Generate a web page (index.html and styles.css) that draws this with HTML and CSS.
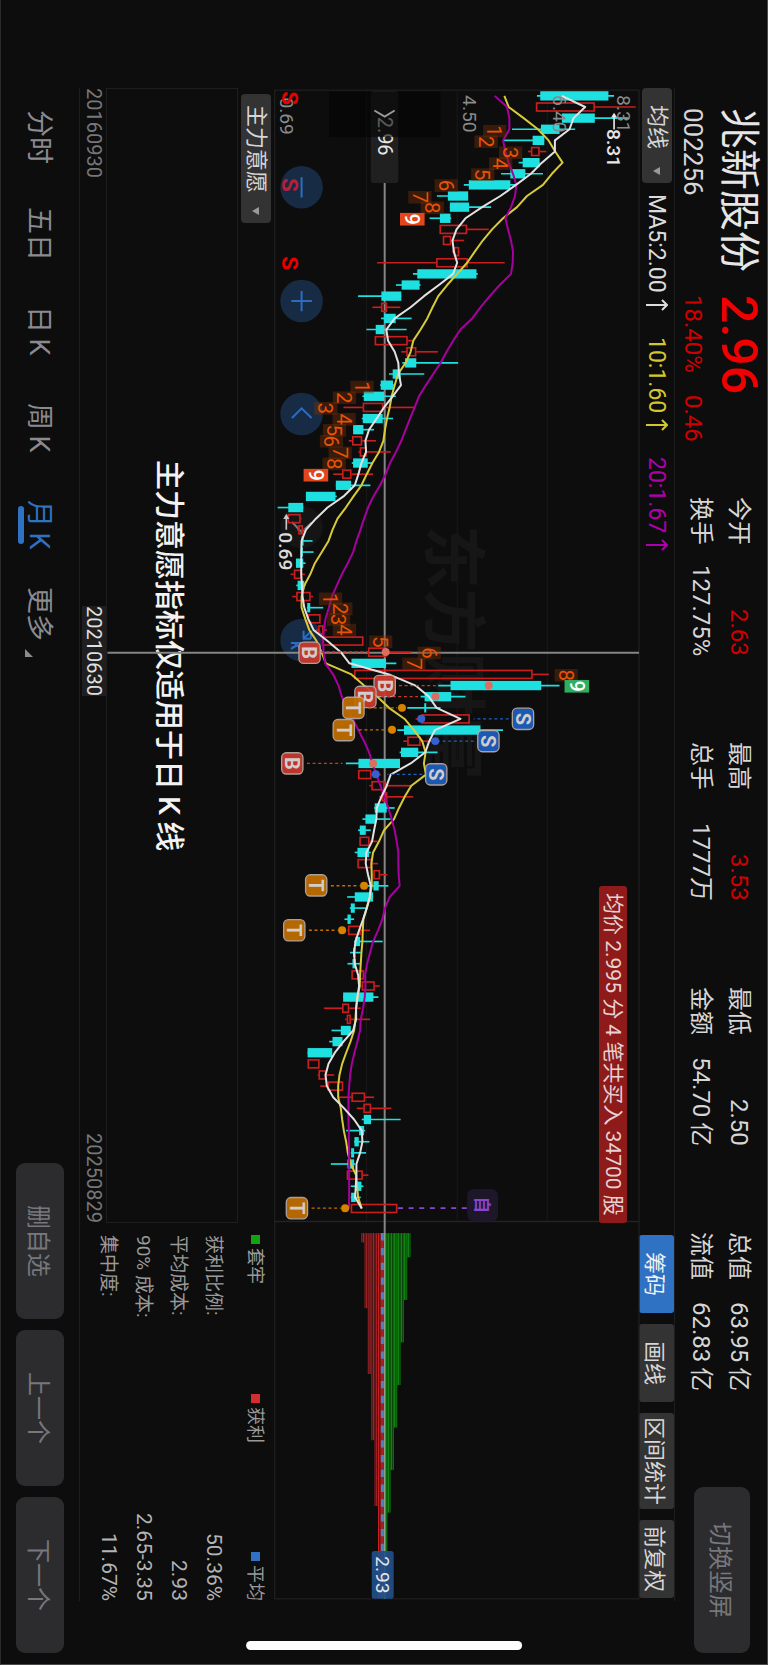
FILE: index.html
```html
<!DOCTYPE html>
<html lang="zh-CN">
<head>
<meta charset="utf-8">
<meta name="viewport" content="width=device-width, initial-scale=1">
<title>兆新股份 002256</title>
<link rel="stylesheet" href="styles.css">
</head>
<body>
<div class="app">
  <header class="quote">
    <div class="identity">
      <h1 class="name">兆新股份</h1>
      <strong class="price">2.96</strong>
      <span class="code">002256</span>
      <span class="change"><span>18.40%</span><span>0.46</span></span>
    </div>
    <dl class="facts">
      <div class="fact"><dt>今开</dt><dd class="up">2.63</dd></div>
      <div class="fact"><dt>换手</dt><dd>127.75%</dd></div>
      <div class="fact"><dt>最高</dt><dd class="up">3.53</dd></div>
      <div class="fact"><dt>总手</dt><dd>1777万</dd></div>
      <div class="fact"><dt>最低</dt><dd>2.50</dd></div>
      <div class="fact"><dt>金额</dt><dd>54.70&thinsp;亿</dd></div>
      <div class="fact"><dt>总值</dt><dd>63.95&thinsp;亿</dd></div>
      <div class="fact"><dt>流值</dt><dd>62.83&thinsp;亿</dd></div>
    </dl>
    <button class="soft-button switch" type="button">切换竖屏</button>
  </header>

  <div class="toolbar">
    <button class="picker" type="button">均线<svg class="caret" viewBox="0 0 8 8" aria-hidden="true"><path d="M7 0v8L0 4z"/></svg></button>
    <span class="ma ma5">MA5:2.00<svg class="arrow" viewBox="0 0 22 12" aria-hidden="true"><path d="M0 6h21M16 1l5 5-5 5"/></svg></span>
    <span class="ma ma10">10:1.60<svg class="arrow" viewBox="0 0 22 12" aria-hidden="true"><path d="M0 6h21M16 1l5 5-5 5"/></svg></span>
    <span class="ma ma20">20:1.67<svg class="arrow" viewBox="0 0 22 12" aria-hidden="true"><path d="M0 6h21M16 1l5 5-5 5"/></svg></span>
    <div class="tools">
      <button class="tool active" type="button">筹码</button>
      <button class="tool" type="button">画线</button>
      <button class="tool wide" type="button">区间统计</button>
      <button class="tool" type="button">前复权</button>
    </div>
  </div>

  <section class="chart" aria-label="月K线图">
    <svg id="kline" class="kline" viewBox="39 24 1098 4542" role="img" aria-label="K线与筹码分布"></svg>
    <p class="note">均价 2.995 分 4 笔共买入 34700 股</p>
  </section>

  <div class="lower">
    <section class="study">
      <div class="study-bar">
        <button class="picker" type="button">主力意愿<svg class="caret" viewBox="0 0 8 8" aria-hidden="true"><path d="M7 0v8L0 4z"/></svg></button>
      </div>
      <p class="message">主力意愿指标仅适用于日&thinsp;K&thinsp;线</p>
      <div class="dates">
        <time>20160930</time>
        <time class="cursor-date">20210630</time>
        <time>20250829</time>
      </div>
    </section>
    <section class="chips">
      <ul class="legend">
        <li class="trapped">套牢</li>
        <li class="profit">获利</li>
        <li class="average">平均</li>
      </ul>
      <dl class="cost">
        <div><dt>获利比例:</dt><dd>50.36%</dd></div>
        <div><dt>平均成本:</dt><dd>2.93</dd></div>
        <div><dt>90% 成本:</dt><dd>2.65-3.35</dd></div>
        <div><dt>集中度:</dt><dd>11.67%</dd></div>
      </dl>
    </section>
  </div>

  <footer class="footer">
    <nav class="tabs">
      <a href="#">分时</a>
      <a href="#">五日</a>
      <a href="#">日&thinsp;K</a>
      <a href="#">周&thinsp;K</a>
      <a href="#" class="current" aria-current="page">月&thinsp;K</a>
      <a href="#">更多<svg class="corner" viewBox="0 0 8 8" aria-hidden="true"><path d="M0 0v8h8z"/></svg></a>
    </nav>
    <div class="actions">
      <button class="soft-button" type="button">删自选</button>
      <button class="soft-button" type="button">上一个</button>
      <button class="soft-button" type="button">下一个</button>
    </div>
  </footer>
</div>
<div class="home-bar"></div>
<script src="chart.js"></script>
</body>
</html>
```
FILE: styles.css
```css
* { box-sizing: border-box; margin: 0; padding: 0; }

html {
  writing-mode: vertical-rl;
  text-orientation: sideways;
  background: #0d0d0d;
}

body {
  height: 100vh;
  width: 100vw;
  position: relative;
  background: #0d0d0d;
  color: #d6d6d6;
  font-family: Roboto, "Noto Sans CJK SC", sans-serif;
  font-size: 22px;
  border-right: 1px solid #4a4a4a;
  border-bottom: 1px solid #4a4a4a;
  border-left: 1px solid #2a2a2a;
}

button {
  font: inherit;
  color: inherit;
  border: 0;
  writing-mode: vertical-rl;
  text-orientation: sideways;
  white-space: nowrap;
  cursor: pointer;
}

.app {
  display: grid;
  grid-template-rows: 92px 36px minmax(0, 1fr) 195px 78px;
  grid-template-columns: minmax(0, 1fr);
  inline-size: 100%;
  block-size: 100%;
  padding-inline-start: 88px;
}

/* Quote header */
.quote {
  display: flex;
  align-items: flex-start;
  padding-inline: 20px 11px;
  position: relative;
}

.identity {
  display: grid;
  grid-template-columns: 187px 202px;
  grid-template-rows: 56px 36px;
  align-items: center;
  white-space: nowrap;
}

.name { font-size: 41px; font-weight: 400; line-height: 48px; color: #e6e6e6; }
.price { font-size: 50px; font-weight: 500; line-height: 50px; color: #f00000; }
.code { font-size: 26px; line-height: 28px; }
.change { display: flex; gap: 22px; font-size: 24px; line-height: 28px; color: #d00000; }

.facts {
  display: grid;
  grid-auto-flow: column;
  grid-template-rows: 38px 38px;
  grid-auto-columns: 159px;
  column-gap: 86px;
  padding-block-start: 9px;
  font-size: 24px;
  line-height: 38px;
  white-space: nowrap;
}

.fact { display: flex; justify-content: space-between; }
.fact .up { color: #d00000; }

.soft-button {
  block-size: 48px;
  inline-size: 156px;
  border-radius: 9px;
  background: #2c2c2e;
  color: #77777c;
  font-size: 24px;
}

.switch {
  block-size: 56px;
  inline-size: 166px;
  margin-inline-start: auto;
  margin-block-start: 17px;
}

/* Indicator toolbar */
.toolbar {
  display: flex;
  align-items: center;
  margin-inline-end: 63px;
  border-block-start: 1px solid #1e1e1e;
}

.picker {
  display: flex;
  align-items: center;
  justify-content: space-between;
  gap: 14px;
  block-size: 30px;
  padding-inline: 11px 8px;
  border-radius: 4px;
  background: #333;
  line-height: 30px;
}

.toolbar .picker { gap: 18px; padding-inline-start: 17px; }

.caret { width: 8px; height: 8px; fill: #9a9a9a; }

.ma { display: flex; align-items: center; gap: 6px; margin-inline-start: 26px; font-size: 23px; }
.ma5 { margin-inline-start: 11px; color: #dcdcdc; }
.ma10 { color: #d3c62e; }
.ma20 { color: #b000ae; }

.arrow {
  width: 22px;
  height: 12px;
  fill: none;
  stroke: currentColor;
  stroke-width: 2;
}

.tools { display: flex; gap: 11px; margin-inline-start: auto; padding-inline-end: 3px; }

.tool {
  block-size: 35px;
  inline-size: 78px;
  border-radius: 3px;
  background: #333;
}

.tool.wide { inline-size: 96px; }
.tool.active { background: #2f72c4; color: #f0f0f0; }

/* Chart */
.chart { position: relative; margin-inline-end: 63px; z-index: 1; min-inline-size: 0; min-block-size: 0; }

.kline {
  display: block;
  width: 100%;
  height: 100%;
  overflow: visible;
  writing-mode: horizontal-tb;
  font-family: Roboto, "Noto Sans CJK SC", sans-serif;
  pointer-events: none;
}

.note {
  position: absolute;
  inset-block-start: 12px;
  inset-inline-end: 378px;
  padding-inline: 7px;
  border-radius: 3px;
  background: #8e1a1a;
  color: #e6d2d2;
  font-size: 21px;
  line-height: 28px;
  white-space: nowrap;
}

/* Lower area */
.lower {
  display: grid;
  grid-template-columns: 1fr 366px;
  column-gap: 12px;
  margin-inline-end: 63px;
  border-block-end: 1px solid #1e1e1e;
}

.study { display: grid; grid-template-rows: 36px 1fr 26px; }
.study-bar { display: flex; align-items: center; padding-inline-start: 6px; }

.message {
  display: flex;
  align-items: center;
  justify-content: center;
  border: 1px solid #1e1e1e;
  color: #f2f2f2;
  font-size: 30px;
  font-weight: 500;
  white-space: nowrap;
}

.dates {
  position: relative;
  display: flex;
  justify-content: space-between;
  color: #77777a;
  font-size: 20px;
  line-height: 24px;
}

.cursor-date {
  position: absolute;
  inset-inline-start: 518px;
  background: #1f1f1f;
  color: #e0e0e0;
}

.chips { color: #9a9a9a; font-size: 18px; white-space: nowrap; }

.legend {
  display: flex;
  justify-content: space-between;
  list-style: none;
  line-height: 38px;
  padding-block-end: 5px;
}

.legend li { display: flex; align-items: center; gap: 4px; }
.legend li::before { content: ""; inline-size: 9px; block-size: 9px; background: currentColor; }
.legend .trapped::before { background: #10a510; }
.legend .profit::before { background: #d12f2f; }
.legend .average::before { background: #2f72c4; }

.cost div { display: flex; justify-content: space-between; line-height: 35px; }
.cost dt { font-size: 19px; }
.cost dd { font-size: 21px; color: #b4b4b4; }

/* Footer */
.footer {
  display: flex;
  align-items: flex-start;
  justify-content: space-between;
  padding-block-start: 15px;
  padding-inline-end: 11px;
}

.tabs { display: flex; }

.tabs a {
  display: flex;
  align-items: center;
  justify-content: center;
  position: relative;
  inline-size: 97px;
  color: #8a8a90;
  font-size: 27px;
  line-height: 50px;
  text-decoration: none;
  white-space: nowrap;
}

.tabs .current { color: #2f72c4; }

.tabs .current::after {
  content: "";
  position: absolute;
  inset-block-end: 4px;
  inline-size: 38px;
  block-size: 6px;
  border-radius: 3px;
  background: #2f72c4;
}

.corner {
  width: 8px;
  height: 8px;
  margin-inline-start: 8px;
  align-self: flex-end;
  margin-block-end: 11px;
  fill: #8a8a90;
}

.actions { display: flex; gap: 11px; }

.home-bar {
  position: absolute;
  bottom: 14px;
  left: 50%;
  width: 36%;
  height: 9px;
  transform: translateX(-50%);
  border-radius: 5px;
  background: #fff;
}
```
FILE: chart.js
```js
// Monthly candles: [direction, low, body start, body end, high]; "d" falls, "u" rises.
const candles = [
  ["d",830,840,1045,1062],["u",827,827,1004,1127],["d",905,905,1004,1105],["d",755,842,898,945],
  ["d",730,817,852,852],["u",803,812,838,858],["d",775,787,838,838],["d",722,750,795,848],
  ["d",610,625,750,765],["d",529,562,623,623],["d",568,568,626,692],["d",507,538,570,572],
  ["u",537,537,620,685],["u",547,547,572,611],["u",575,580,596,598],["u",349,527,622,733],
  ["d",457,470,648,652],["d",406,423,477,480],["d",292,362,422,422],["u",335,361,379,419],
  ["d",361,370,405,453],["d",317,345,370,438],["u",342,342,441,455],["u",422,437,467,532],
  ["d",425,433,467,593],["d",385,396,420,491],["d",358,360,397,400],["d",305,309,370,405],
  ["u",248,306,368,462],["d",303,306,366,397],["d",277,277,308,340],["u",264,274,304,346],
  ["u",293,297,318,390],["d",273,277,321,335],["u",217,244,272,337],["d",225,225,271,329],
  ["d",135,135,224,228],["d",50,82,127,127],["u",80,80,119,122],["u",108,112,126,132],
  ["d",122,122,128,155],["d",120,120,126,158],["d",105,105,127,134],["u",89,99,122,132],
  ["d",106,110,130,134],["u",94,106,149,157],["d",138,139,148,187],["u",140,140,179,179],
  ["u",165,172,188,198],["u",185,185,308,308],["u",320,322,378,452],["d",272,272,376,407],
  ["u",280,280,817,866],["d",533,570,843,898],["d",480,492,572,615],["d",440,491,497,540],
  ["u",465,482,628,628],["d",410,430,660,728],["u",428,440,480,525],["d",417,421,473,531],
  ["d",255,293,418,418],["u",292,292,332,360],["u",326,332,372,452],["u",355,363,380,458],
  ["d",340,342,378,402],["d",305,314,345,390],["d",292,297,315,330],["u",295,296,326,350],
  ["d",282,290,325,330],["u",290,290,334,352],["u",335,338,358,380],["d",320,338,354,383],
  ["d",259,282,337,337],["d",267,270,282,320],["d",251,260,270,280],["u",260,262,300,328],
  ["d",280,284,298,366],["d",268,277,284,300],["d",260,275,285,298],["u",272,272,310,310],
  ["u",300,303,342,357],["d",247,247,338,353],["u",189,244,265,300],["u",253,258,270,328],
  ["d",212,240,270,270],["d",205,215,245,246],["d",140,140,214,214],["u",140,140,176,176],
  ["u",170,173,196,220],["u",178,200,247,247],["u",235,272,313,340],["u",288,308,331,392],
  ["d",303,309,331,420],["d",256,295,310,313],["d",280,281,294,326],["d",270,271,280,316],
  ["d",210,260,280,283],["u",258,258,306,323],["d",270,284,302,308],["d",270,271,285,300],
  ["u",270,270,410,410]
];

const ma5 = [905,975,940,928,884,884,845,812,767,720,665,615,588,576,580,590,578,535,490,450,
  402,377,382,402,413,415,421,396,370,348,325,314,316,302,293,282,248,200,165,135,
  122,121,121,121,123,125,130,142,158,200,240,266,385,465,505,528,600,523,506,494,
  450,390,378,362,348,347,340,334,317,315,322,330,327,318,307,295,284,280,282,292,
  295,290,286,286,277,248,222,203,194,198,217,250,280,303,305,298,287,287,285,283,303];
const ma10 = [732,745,790,833,865,885,907,875,848,800,770,728,695,667,643,620,590,560,533,516,
  500,480,458,450,435,412,402,393,387,379,373,368,355,335,318,302,278,255,230,215,
  203,183,162,148,130,122,122,133,145,167,182,195,272,310,350,385,432,460,485,495,
  490,496,452,432,415,400,370,355,337,332,333,333,328,318,308,306,305,302,300,298,
  297,290,286,284,280,269,256,244,236,232,232,240,244,249,256,261,270,286,289,292,303];
const ma20 = [703,740,747,747,728,735,745,758,768,764,752,735,743,752,758,757,752,718,688,660,
  635,600,578,558,540,518,496,475,462,448,435,422,406,388,375,358,338,322,310,299,
  287,277,261,243,228,213,204,194,189,187,188,193,217,233,243,256,276,293,310,325,
  335,347,359,372,383,393,402,408,413,413,414,417,387,373,365,352,337,328,319,313,
  314,312,307,300,298,290,281,273,268,265,263,263,263,264,264,265,265,265,265,265,265];

const FALL = "#1fe0e0", RISE = "#c81e1e";
const rowY = i => 43 + 33.47 * i;
const parts = [];
const add = s => parts.push(s);
const line = (x1, y1, x2, y2, color, w, extra = "") =>
  add(`<line x1="${x1}" y1="${y1}" x2="${x2}" y2="${y2}" stroke="${color}" stroke-width="${w}" ${extra}/>`);
const rect = (x, y, w, h, fill, extra = "") =>
  add(`<rect x="${x}" y="${y}" width="${w}" height="${h}" fill="${fill}" ${extra}/>`);
const label = (x, y, text, size, fill, weight = 400) =>
  add(`<text transform="translate(${x} ${y}) rotate(90)" text-anchor="middle" dy="0.36em" font-size="${size}" font-weight="${weight}" fill="${fill}">${text}</text>`);

// Frame and price grid
[317, 590, 861].forEach(x => line(x, 26, x, 3429, "#1a1a1b", 3));
add('<rect x="41" y="26" width="1096" height="4538" fill="none" stroke="#1e1e1f" stroke-width="4"/>');
line(41, 3429, 1137, 3429, "#232324", 4);
label(580, 1718, "东方财富", 192, "#161617", 700);

// Round chart controls
[318, 660, 1000, 1680].forEach(y => add(`<circle cx="122" cy="${y}" r="64" fill="#182b45"/>`));
add('<circle cx="122" cy="1340" r="64" fill="#151516"/>');
add('<g fill="none" stroke="#2c6dbf" stroke-width="6"><path d="M122 288v61M122 630v61M91 660h62M93 1012l29-29 30 29"/></g>');
add('<path d="M93 1325l29 30 30-28" fill="none" stroke="#77777a" stroke-width="6"/>');
add('<path d="M128 1652v24h22M130 1674l18-18M150 1652v24" fill="none" stroke="#2c6dbf" stroke-width="6"/>');
label(104, 1696, "K", 42, "#2c6dbf", 700);

// Crosshair
line(372, 305, 372, 4564, "#858585", 6);
line(-462, 1718, 1137, 1718, "#858585", 6);

// Candles
candles.forEach(([dir, low, a, b, high], i) => {
  const y = rowY(i);
  if (dir === "d") {
    line(low, y, high, y, FALL, 5);
    rect(a, y - 14, b - a, 28, FALL);
  } else {
    if (low < a) line(low, y, a, y, RISE, 5);
    if (high > b) line(b, y, high, y, RISE, 5);
    rect(a + 2, y - 12, b - a - 4, 24, "none", `stroke="${RISE}" stroke-width="5"`);
  }
});

// Axis labels
[[1093, 97, "8.31"], [898, 97, "6.40"], [627, 97, "4.50"], [79, 104, "0.69"]]
  .forEach(([x, y, t]) => label(x, y, t, 58, "#8a8a8c"));

// Cursor price
rect(330, 28, 83, 277, "#202021", 'rx="8"');
label(372, 164, "2.96", 60, "#e6e6e6");
rect(205, 30, 335, 137, "#050505", 'opacity="0.62"');
add('<path d="M341 87l31 18 30-18" fill="none" stroke="#9a9a9a" stroke-width="6"/>');

// Moving averages
[[ma10, "#d8cb3a"], [ma20, "#a8009f"], [ma5, "#e2e2e2"]].forEach(([values, color]) =>
  add(`<polyline points="${values.map((v, i) => `${v},${rowY(i)}`).join(" ")}" fill="none" stroke="${color}" stroke-width="6" stroke-linejoin="round"/>`));

// Sequence counts
const counts = [
  [703,149,1],[677,181,2],[751,214,3],[721,247,4],[667,280,5],[557,313,6],[478,348,7],[515,380,8],
  [304,919,1],[251,951,2],[195,983,3],[250,1016,4],[221,1049,5],[212,1082,6],[238,1117,7],[220,1150,8],
  [209,1556,1],[240,1586,2],[233,1618,3],[251,1650,4],[360,1685,5],[506,1719,6],[460,1752,7],[918,1786,8]
];
counts.forEach(([x, y]) => rect(x - 35, y - 19, 70, 38, "#7a3208", 'opacity="0.4"'));
counts.forEach(([x, y, n]) => label(x, y, n, 62, "#e85205"));
[[455, 414, "#e2461c"], [165, 1184, "#e2461c"], [950, 1819, "#2fae62"]].forEach(([x, y, fill]) => {
  rect(x - 37, y - 19, 74, 38, fill);
  label(x, y, "9", 60, "#fff", 500);
});

// Period extremes
line(1062, 100, 1062, 144, "#e6e6e6", 5);
add('<path d="M1053 108l9-14 9 14z" fill="#e6e6e6"/>');
label(1062, 200, "8.31", 58, "#e6e6e6", 500);
line(76, 1308, 76, 1348, "#c8c8c8", 5);
add('<path d="M67 1316l9-16 9 16z" fill="#c8c8c8"/>');
label(75, 1413, "0.69", 58, "#dcdcdc", 500);

// Signal letters
[[50, "#e60000"], [311, "#b81f38"], [546, "#e60000"]].forEach(([y, c]) => label(88, y, "S", 68, c, 700));

// Trades: [letter, badge x, badge y, leader start, leader end, dot x, dot y]
const TRADE = { B: "#cc3a2e", T: "#c26f00", S: "#1d5fc0" };
const DOT = { B: "#d86f60", T: "#d98200", S: "#3560d0" };
[
  ["B",146,1718,180,320,375,1716],["B",372,1818,415,525,685,1817],["B",314,1851,362,472,525,1850],
  ["B",94,2051,138,245,337,2051],["T",278,1884,322,410,424,1884],["T",249,1951,294,380,394,1950],
  ["T",166,2418,210,296,310,2419],["T",100,2553,144,230,244,2553],["T",108,3389,152,240,253,3389],
  ["S",788,1917,745,640,482,1917],["S",684,1984,640,535,524,1984],["S",527,2084,485,380,345,2084]
].forEach(([t, bx, by, s, e, dx, dy]) => {
  line(s, dy, e, dy, TRADE[t], 4, 'stroke-dasharray="9 8"');
  add(`<circle cx="${dx}" cy="${dy}" r="12" fill="${DOT[t]}"/>`);
  rect(bx - 32, by - 32, 64, 64, TRADE[t], 'rx="14" stroke="#b9aaa4" stroke-width="4" opacity="0.93"');
  label(bx, by, t, 60, "#d2cdcb", 700);
});

// Watchlist marker
line(412, 3389, 620, 3389, "#8a45cf", 5, 'stroke-dasharray="15 17"');
rect(620, 3331, 93, 98, "#1e1629", 'rx="20"');
label(665, 3379, "自", 50, "#8a45cf", 700);

// Chip distribution
[450, 440, 430, 420, 410, 400, 390, 380].forEach((x, i) => {
  const h = 73 + i * 128;
  rect(x - 10, 3464, 5, h, "#138213");
  rect(x - 4, 3464, 4, h, "#0c6a0c");
});
[[301, 28], [311, 226], [321, 424], [331, 623], [341, 821], [352, 1098]].forEach(([x, h], i) => {
  rect(x, 3464, 4, h, i === 5 ? "#d12222" : "#7e1d1f");
  rect(x + 5, 3464, 4, h, i === 5 ? "#7e1d1f" : "#a32426");
});
rect(361, 3464, 8, 1098, "#a32426");
line(365, 3464, 365, 4564, "#5580bf", 9, 'stroke-dasharray="22 22.5"');
line(372, 3464, 372, 4564, "#8fa28f", 4);
rect(333, 4420, 66, 144, "#20508a", 'rx="8" opacity="0.93"');
label(366, 4492, "2.93", 58, "#e6e6e6");

document.getElementById("kline").innerHTML = parts.join("");
```
